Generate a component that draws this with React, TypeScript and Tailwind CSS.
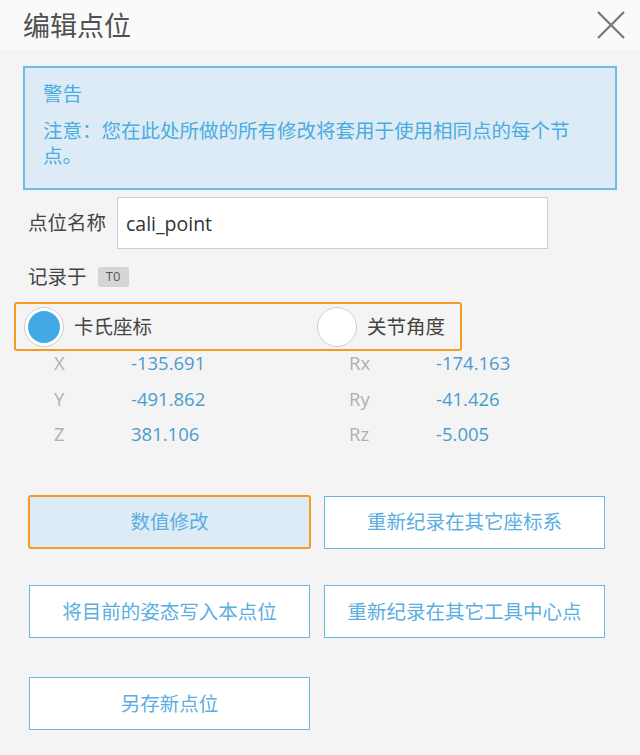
import React, { useState } from "react";

const font = "font-['Open_Sans','Noto_Sans_CJK_SC',sans-serif]";

type Coord = { label: string; value: string };

const left: Coord[] = [
  { label: "X", value: "-135.691" },
  { label: "Y", value: "-491.862" },
  { label: "Z", value: "381.106" },
];

const right: Coord[] = [
  { label: "Rx", value: "-174.163" },
  { label: "Ry", value: "-41.426" },
  { label: "Rz", value: "-5.005" },
];

const Radio: React.FC<{ checked: boolean; label: string; onClick: () => void }> = ({
  checked,
  label,
  onClick,
}) => (
  <button onClick={onClick} className="flex items-center gap-[10px]">
    <span className="w-[40px] h-[40px] rounded-full border-[1.5px] border-[#cfcfcf] bg-white flex items-center justify-center">
      {checked && <span className="w-[32px] h-[32px] rounded-full bg-[#43a9e6]" />}
    </span>
    <span className="text-[19.5px] text-[#444]">{label}</span>
  </button>
);

const ActionButton: React.FC<{ children: React.ReactNode; active?: boolean }> = ({
  children,
  active,
}) => (
  <button
    className={
      active
        ? "w-[283px] h-[54px] border-2 border-[#f59b25] rounded-[3px] bg-[#dcebf6] text-[19.5px] text-[#5aaee0]"
        : "w-[281px] h-[53px] border border-[#6bb7e0] bg-white text-[19.5px] text-[#5aaee0]"
    }
  >
    {children}
  </button>
);

const CoordColumn: React.FC<{ items: Coord[]; labelWidth: string; width?: string }> = ({
  items,
  labelWidth,
  width,
}) => (
  <div className={`flex flex-col gap-[11.5px] ${width ?? ""}`}>
    {items.map((c) => (
      <div key={c.label} className="flex h-[24px] items-center text-[18.5px]">
        <span className={`${labelWidth} text-[#b0b0b0]`}>{c.label}</span>
        <span className="text-[#4a9ccf]">{c.value}</span>
      </div>
    ))}
  </div>
);

const App: React.FC = () => {
  const [mode, setMode] = useState<"cart" | "joint">("cart");
  const [name, setName] = useState<string>("cali_point");

  return (
    <div className={`w-[640px] h-[755px] bg-[#f4f4f4] ${font}`}>
      <div className="h-[50px] bg-[#fafafa] flex items-center justify-between pl-[23px] pr-[15px]">
        <div className="text-[27px] text-[#505050] leading-none">编辑点位</div>
        <svg width="28" height="28" viewBox="0 0 28 28">
          <path d="M1 1L27 27M27 1L1 27" stroke="#777" strokeWidth="2.2" />
        </svg>
      </div>

      <div className="mx-[23px] mt-[16px] h-[124px] border-2 border-[#6fbde6] bg-[#dcebf6] pl-[18px] pr-[34px] pt-[13px] text-[#4aacdf] text-[19.5px] leading-[25px]">
        <div className="mb-[12px]">警告</div>
        <div>注意：您在此处所做的所有修改将套用于使用相同点的每个节点。</div>
      </div>

      <div className="flex items-center mt-[7px] pl-[28px]">
        <span className="text-[19.5px] text-[#444] w-[89px]">点位名称</span>
        <input
          value={name}
          onChange={(e: React.ChangeEvent<HTMLInputElement>) => setName(e.target.value)}
          className="w-[431px] h-[52px] bg-white border border-[#cdcdcd] pl-[8px] text-[19.5px] text-[#333] outline-none"
        />
      </div>

      <div className="flex items-center mt-[15px] pl-[28px] h-[26px]">
        <span className="text-[19.5px] text-[#444]">记录于</span>
        <span className="ml-[11px] w-[31px] h-[20px] rounded-[3px] bg-[#d5d5d5] text-[13px] text-[#555] flex items-center justify-center">
          T0
        </span>
      </div>

      <div className="ml-[14px] mt-[12px] w-[448px] h-[49px] border-2 border-[#f59b25] rounded-[3px] flex items-center pl-[8px]">
        <div className="w-[293px]">
          <Radio checked={mode === "cart"} label="卡氏座标" onClick={() => setMode("cart")} />
        </div>
        <Radio checked={mode === "joint"} label="关节角度" onClick={() => setMode("joint")} />
      </div>

      <div className="flex pl-[54px]">
        <CoordColumn items={left} labelWidth="w-[77px]" width="w-[295px]" />
        <CoordColumn items={right} labelWidth="w-[87px]" />
      </div>

      <div className="pl-[28px] mt-[49px] flex flex-col">
        <div className="flex items-center gap-[13px]">
          <ActionButton active>数值修改</ActionButton>
          <ActionButton>重新纪录在其它座标系</ActionButton>
        </div>
        <div className="flex items-center gap-[14px] pl-[1px] mt-[36px]">
          <ActionButton>将目前的姿态写入本点位</ActionButton>
          <ActionButton>重新纪录在其它工具中心点</ActionButton>
        </div>
        <div className="flex items-center pl-[1px] mt-[39px]">
          <ActionButton>另存新点位</ActionButton>
        </div>
      </div>
    </div>
  );
};

export default App;
